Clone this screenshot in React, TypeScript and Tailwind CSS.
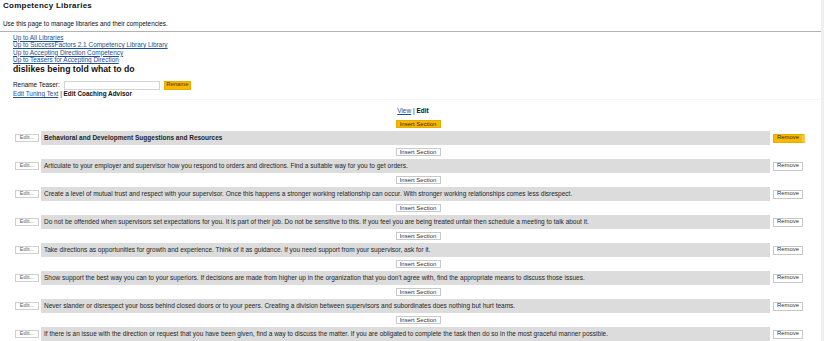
import React from 'react';

const crumbs = [
  'Up to All Libraries',
  'Up to SuccessFactors 2.1 Competency Library Library',
  'Up to Accepting Direction Competency',
  'Up to Teasers for Accepting Direction',
];

const sections = [
  'Articulate to your employer and supervisor how you respond to orders and directions. Find a suitable way for you to get orders.',
  'Create a level of mutual trust and respect with your supervisor. Once this happens a stronger working relationship can occur. With stronger working relationships comes less disrespect.',
  'Do not be offended when supervisors set expectations for you. It is part of their job. Do not be sensitive to this. If you feel you are being treated unfair then schedule a meeting to talk about it.',
  'Take directions as opportunities for growth and experience. Think of it as guidance. If you need support from your supervisor, ask for it.',
  "Show support the best way you can to your superiors. If decisions are made from higher up in the organization that you don't agree with, find the appropriate means to discuss those issues.",
  'Never slander or disrespect your boss behind closed doors or to your peers. Creating a division between supervisors and subordinates does nothing but hurt teams.',
  'If there is an issue with the direction or request that you have been given, find a way to discuss the matter. If you are obligated to complete the task then do so in the most graceful manner possible.',
];

const InsertButton = ({ primary = false }: { primary?: boolean }) => (
  <div className="flex justify-center pl-[2px]">
    <button
      className={`h-[8.5px] w-[45px] flex items-center justify-center text-[6px] leading-none border ${
        primary ? 'bg-[#f7b900] border-[#e8ac00] text-[#3a2a00]' : 'bg-white border-[#c8c8c8] text-[#333]'
      }`}
    >
      Insert Section
    </button>
  </div>
);

const SectionRow = ({ text, header = false }: { text: string; header?: boolean }) => (
  <div className="flex items-center h-[14px]">
    <button className="ml-[2px] h-[8px] w-[24px] flex items-center justify-center bg-white border border-[#cfcfcf] text-[5.6px] leading-none text-[#666]">
      Edit...
    </button>
    <div
      className={`ml-[2px] h-[14px] w-[729px] bg-[#dcdcdc] flex items-center pl-[3px] text-[6.5px] text-[#1e1e1e] whitespace-nowrap overflow-hidden ${
        header ? 'font-bold' : ''
      }`}
    >
      {text}
    </div>
    <button
      className={`ml-[3px] h-[9px] flex items-center justify-center text-[5.9px] leading-none border ${
        header
          ? 'w-[32px] bg-[#f7b900] border-[#e8ac00] border-r-[3px] border-r-[#f3c94a] text-[#3a2a00]'
          : 'w-[30px] bg-white border-[#c8c8c8] text-[#333]'
      }`}
    >
      Remove
    </button>
  </div>
);

export default function App() {
  return (
    <div className="flex w-[824px] h-[341px] overflow-hidden bg-white font-['Liberation_Sans',Arial,sans-serif] text-[#111]">
      <div className="w-[821px] flex flex-col">
        <div className="px-[3px]">
          <h1 className="text-[8px] leading-[12px] font-bold tracking-[0.25px]">Competency Libraries</h1>
          <p className="mt-[8px] text-[6.4px] leading-[8px]">Use this page to manage libraries and their competencies.</p>
        </div>
        <div className="mt-[3px] h-[2px] bg-[#b3b3b3]" />

        <div className="pl-[13px] pt-[2px]">
          {crumbs.map((c) => (
            <div key={c} className="text-[6.45px] leading-[7.5px]">
              <a href="#" className="text-[#1d4f91] underline">
                {c}
              </a>
            </div>
          ))}
          <div className="text-[8.7px] leading-[11px] font-bold">dislikes being told what to do</div>

          <div className="mt-[5.5px] flex items-center h-[10px] text-[6.4px]">
            <span>Rename Teaser:</span>
            <input className="ml-[4px] h-[9px] w-[96px] bg-white border border-[#d4d4d4]" />
            <button className="ml-[4px] h-[9px] w-[27px] flex items-center justify-center bg-[#f7b900] border border-[#e8ac00] text-[5.9px] leading-none text-[#4a3400]">
              Rename
            </button>
          </div>
          <div className="text-[6.4px] leading-[8px]">
            <a href="#" className="text-[#1d4f91] underline">
              Edit Tuning Text
            </a>{' '}
            | <span className="font-bold">Edit Coaching Advisor</span>
          </div>
        </div>

        <div className="mt-[1px] ml-[13px] h-[3px] bg-[#f6f6f6]" />

        <div className="mt-[7px] text-center text-[6.5px] leading-[8px] pl-[5px]">
          <a href="#" className="text-[#1d4f91] underline">
            View
          </a>{' '}
          | <span className="font-bold">Edit</span>
        </div>

        <div className="pl-[13px] mt-[4.5px] flex flex-col">
          <InsertButton primary />
          <div className="mt-[3px]">
            <SectionRow header text="Behavioral and Development Suggestions and Resources" />
          </div>
          {sections.map((s) => (
            <div key={s} className="flex flex-col">
              <div className="mt-[2.75px]">
                <InsertButton />
              </div>
              <div className="mt-[2.75px]">
                <SectionRow text={s} />
              </div>
            </div>
          ))}
        </div>
      </div>
      <div className="w-[3px] bg-[#f0f0f0]" />
    </div>
  );
}
